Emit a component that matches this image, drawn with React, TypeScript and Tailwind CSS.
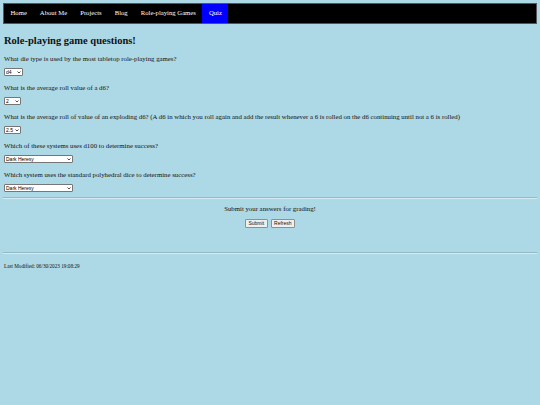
import React from "react";

const serif = { fontFamily: '"Liberation Serif", "Times New Roman", serif' };

const NAV = [
  { label: "Home", active: false },
  { label: "About Me", active: false },
  { label: "Projects", active: false },
  { label: "Blog", active: false },
  { label: "Role-playing Games", active: false },
  { label: "Quiz", active: true },
];

const QUESTIONS = [
  { q: "What die type is used by the most tabletop role-playing games?", v: "d4", w: "w-[19px]" },
  { q: "What is the average roll value of a d6?", v: "2", w: "w-[17px]" },
  {
    q: "What is the average roll of value of an exploding d6? (A d6 in which you roll again and add the result whenever a 6 is rolled on the d6 continuing until not a 6 is rolled)",
    v: "2.5",
    w: "w-[17px]",
  },
  { q: "Which of these systems uses d100 to determine success?", v: "Dark Heresy", w: "w-[69px]" },
  { q: "Which system uses the standard polyhedral dice to determine success?", v: "Dark Heresy", w: "w-[69px]" },
];

function FakeSelect({ value, w }: { value: string; w: string }) {
  return (
    <div className={`relative h-[8px] ${w}`}>
      <select
        defaultValue={value}
        className={`block h-[8px] ${w} appearance-none rounded-[1px] border border-[#767676] bg-white pl-[1px] text-[5px] leading-[6px] text-black`}
        style={{ fontFamily: '"Liberation Sans", Arial, sans-serif' }}
      >
        <option>{value}</option>
      </select>
      <svg
        className="pointer-events-none absolute right-[2px] top-[2.5px] h-[3px] w-[4px]"
        viewBox="0 0 8 6"
        fill="none"
        stroke="#222"
        strokeWidth="1.6"
      >
        <path d="M1 1l3 3 3-3" />
      </svg>
    </div>
  );
}

function Rule() {
  return <div className="h-[2px] border-t border-b border-t-[#97b8c3] border-b-[#d3ecf3]" />;
}

export default function App() {
  return (
    <div className="min-h-[405px] w-[540px] bg-[#add8e6] px-[3px] pt-[3px] text-[6.8px] text-[#111]" style={serif}>
      <nav className="flex h-[21px] border border-[#555] bg-black text-[6.7px]">
        {NAV.map((n) => (
          <a
            key={n.label}
            className={`flex items-center px-[6.5px] text-white ${n.active ? "bg-[#0000ff]" : ""}`}
          >
            {n.label}
          </a>
        ))}
      </nav>

      <h2 className="mt-[10px] ml-[1px] text-[10.5px] font-bold leading-[14px]">Role-playing game questions!</h2>

      <form className="ml-[1px] mt-[6px]">
        {QUESTIONS.map((x) => (
          <div key={x.q} className="pb-[7px]">
            <p className="leading-[9px]">{x.q}</p>
            <div className="mt-[5px]">
              <FakeSelect value={x.v} w={x.w} />
            </div>
          </div>
        ))}
      </form>

      <div className="-mt-[2px]">
        <Rule />
      </div>

      <div className="mt-[5px] flex flex-col items-center">
        <p className="leading-[9px]">Submit your answers for grading!</p>
        <div className="mt-[6px] flex gap-[3px]" style={{ fontFamily: '"Liberation Sans", Arial, sans-serif' }}>
          <button className="h-[9px] rounded-[1px] border border-[#8f8f8f] bg-[#efefef] px-[2.5px] text-[5px] leading-[7px]">
            Submit
          </button>
          <button className="h-[9px] rounded-[1px] border border-[#8f8f8f] bg-[#efefef] px-[2.5px] text-[5px] leading-[7px]">
            Refresh
          </button>
        </div>
      </div>

      <div className="mt-[24px]">
        <Rule />
      </div>

      <p className="mt-[9px] ml-[1px] text-[5.2px] leading-[7px]">Last Modified: 06/30/2023 19:08:29</p>
    </div>
  );
}
